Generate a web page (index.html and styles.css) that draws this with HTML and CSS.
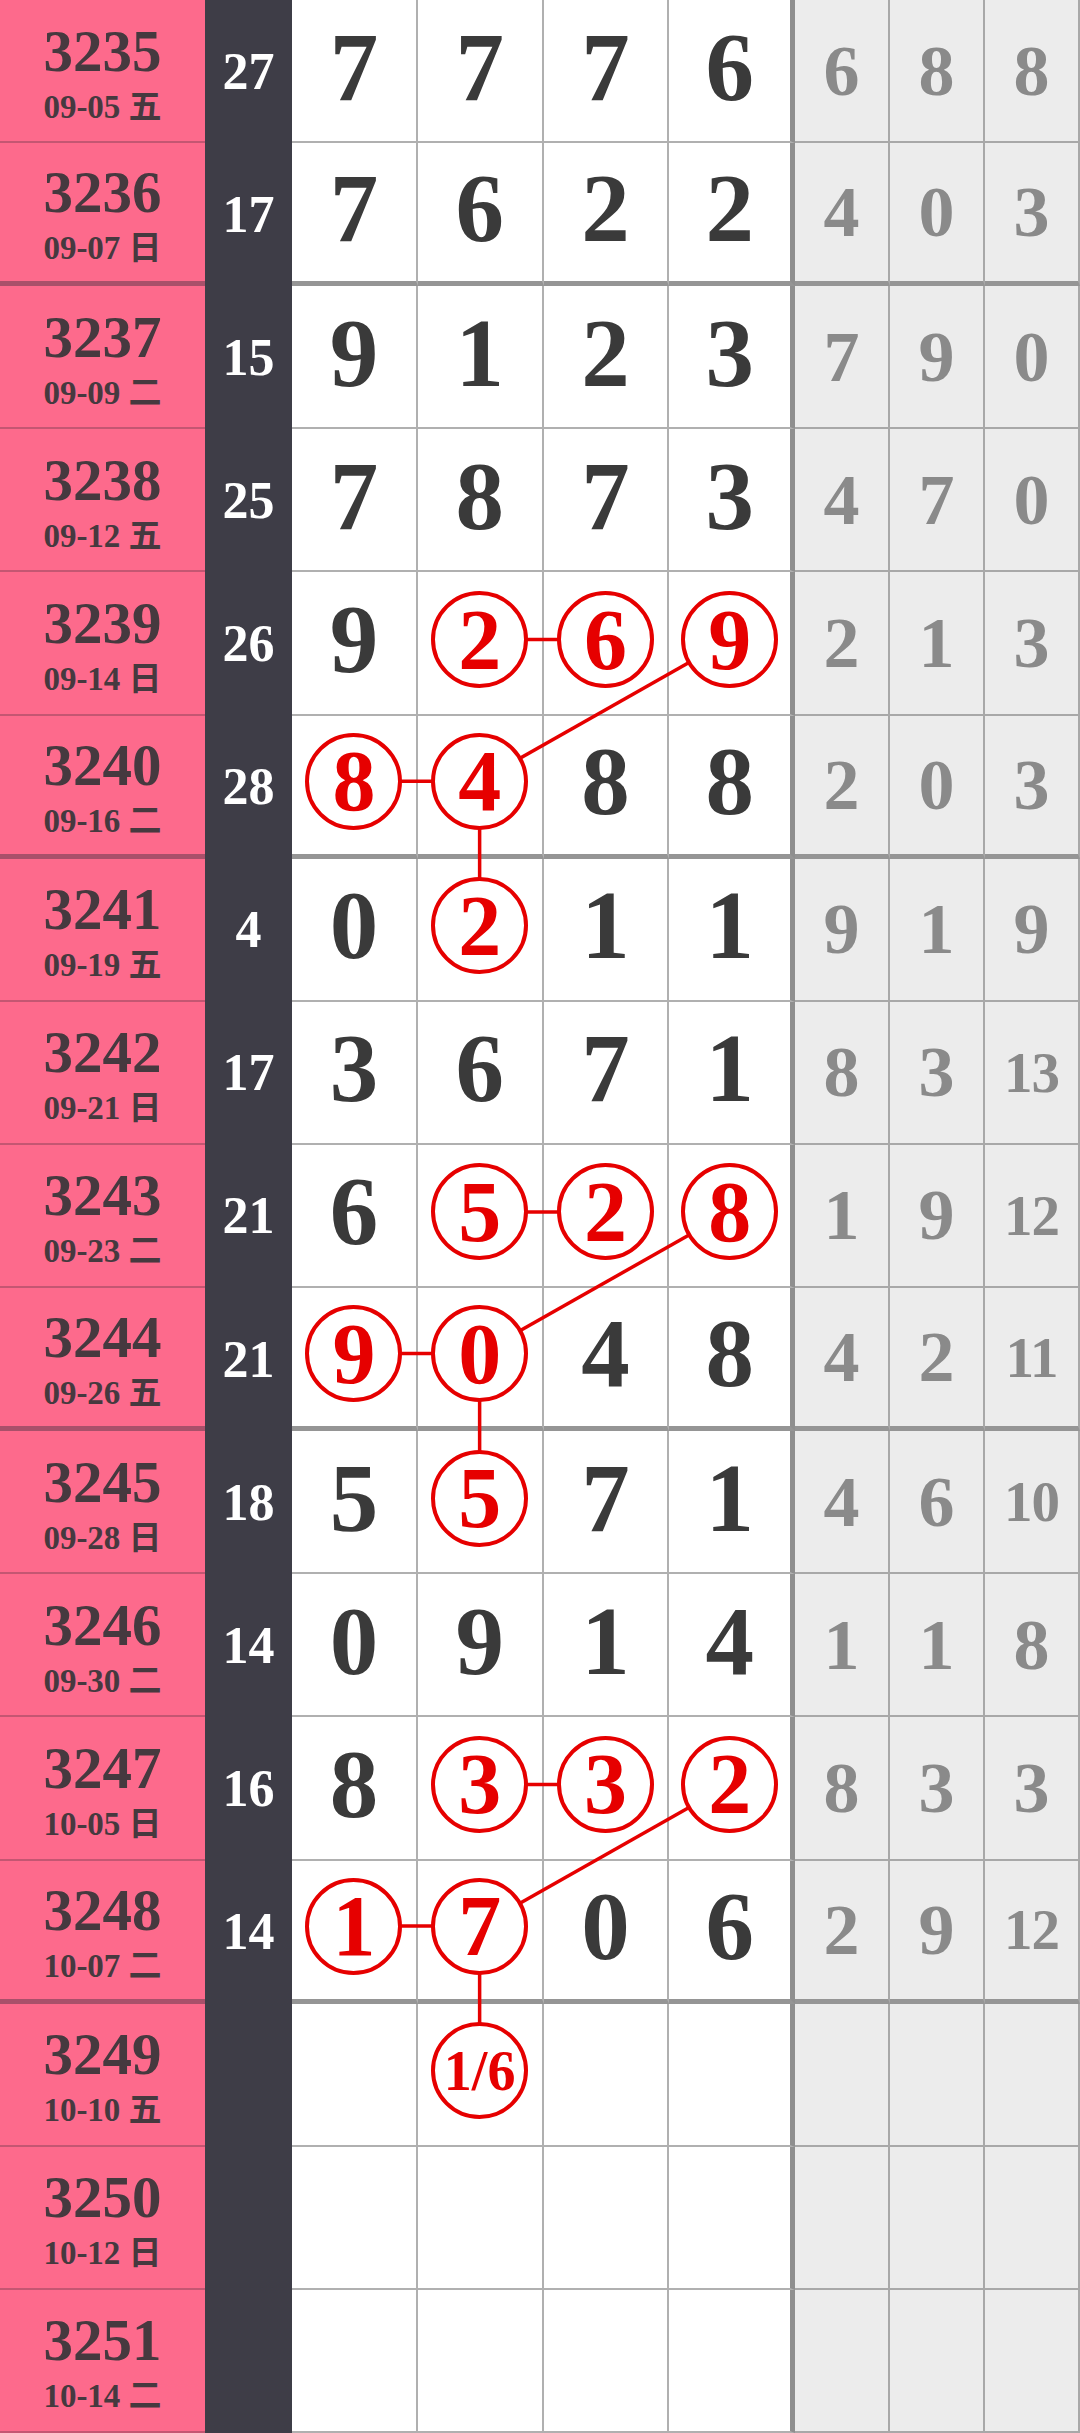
FILE: index.html
```html
<html>
<head>
    <title>排列三走势</title>
    <link rel="stylesheet" href="styles.css">
</head>
<body>
    <div class="board" id="board">
        <svg class="links" id="links"></svg>
    </div>

    <script>
        // issue, date, sum, digits ('*' = circled), missing counts
        const rows = [
            ['3235', '09-05 五', '27', ['7', '7', '7', '6'], ['6', '8', '8']],
            ['3236', '09-07 日', '17', ['7', '6', '2', '2'], ['4', '0', '3']],
            ['3237', '09-09 二', '15', ['9', '1', '2', '3'], ['7', '9', '0']],
            ['3238', '09-12 五', '25', ['7', '8', '7', '3'], ['4', '7', '0']],
            ['3239', '09-14 日', '26', ['9', '*2', '*6', '*9'], ['2', '1', '3']],
            ['3240', '09-16 二', '28', ['*8', '*4', '8', '8'], ['2', '0', '3']],
            ['3241', '09-19 五', '4', ['0', '*2', '1', '1'], ['9', '1', '9']],
            ['3242', '09-21 日', '17', ['3', '6', '7', '1'], ['8', '3', '13']],
            ['3243', '09-23 二', '21', ['6', '*5', '*2', '*8'], ['1', '9', '12']],
            ['3244', '09-26 五', '21', ['*9', '*0', '4', '8'], ['4', '2', '11']],
            ['3245', '09-28 日', '18', ['5', '*5', '7', '1'], ['4', '6', '10']],
            ['3246', '09-30 二', '14', ['0', '9', '1', '4'], ['1', '1', '8']],
            ['3247', '10-05 日', '16', ['8', '*3', '*3', '*2'], ['8', '3', '3']],
            ['3248', '10-07 二', '14', ['*1', '*7', '0', '6'], ['2', '9', '12']],
            ['3249', '10-10 五', '', ['', '*1/6', '', ''], ['', '', '']],
            ['3250', '10-12 日', '', ['', '', '', ''], ['', '', '']],
            ['3251', '10-14 二', '', ['', '', '', ''], ['', '', '']]
        ];
        const groupEnds = [1, 5, 9, 13];
        const groupStarts = [4, 8, 12];

        const board = document.getElementById('board');
        const links = document.getElementById('links');

        function addCell(className, html) {
            const cell = document.createElement('div');
            cell.className = 'cell ' + className;
            cell.innerHTML = html;
            board.appendChild(cell);
            return cell;
        }

        rows.forEach((row, r) => {
            const [issue, date, sum, nums, miss] = row;
            const end = groupEnds.includes(r) ? ' end' : '';

            addCell('issue' + end, `<span class="no">${issue}</span><span class="date">${date}</span>`);
            addCell('sum', sum);

            nums.forEach((n, c) => {
                const last = c === nums.length - 1 ? ' last' : '';
                let html = n;
                if (n.startsWith('*')) {
                    const label = n.slice(1);
                    const small = label.length > 1 ? ' small' : '';
                    html = `<span class="ring${small}" id="ring-${r}-${c}">${label}</span>`;
                }
                addCell('num' + last + end, html);
            });

            miss.forEach((m, c) => {
                const two = m.length > 1 ? ' two' : '';
                addCell('miss' + two + end, m);
            });
        });

        // red connecting lines between circled digits
        const pairs = [];
        groupStarts.forEach(r => {
            pairs.push([[r, 1], [r, 2]]);
            pairs.push([[r, 3], [r + 1, 1]]);
            pairs.push([[r + 1, 0], [r + 1, 1]]);
            pairs.push([[r + 1, 1], [r + 2, 1]]);
        });

        function center(r, c) {
            const box = document.getElementById(`ring-${r}-${c}`).getBoundingClientRect();
            const base = board.getBoundingClientRect();
            return [box.left - base.left + box.width / 2, box.top - base.top + box.height / 2];
        }

        links.setAttribute('width', board.offsetWidth);
        links.setAttribute('height', board.offsetHeight);
        pairs.forEach(([a, b]) => {
            const p = center(a[0], a[1]);
            const q = center(b[0], b[1]);
            const line = document.createElementNS('http://www.w3.org/2000/svg', 'line');
            line.setAttribute('x1', p[0]);
            line.setAttribute('y1', p[1]);
            line.setAttribute('x2', q[0]);
            line.setAttribute('y2', q[1]);
            links.appendChild(line);
        });
    </script>
</body>
</html>
```

FILE: styles.css
```css
body {
    margin: 0;
    background: #fff;
    font-family: 'Liberation Serif', 'Noto Sans CJK SC', serif;
}
.board {
    position: relative;
    display: grid;
    grid-template-columns: 205px 87px repeat(4, 1fr) repeat(3, 95px);
    grid-template-rows: repeat(17, 1fr);
    width: 1080px;
    height: 2433px;
}
.links {
    position: absolute;
    top: 0;
    left: 0;
    z-index: 1;
    pointer-events: none;
}
.links line {
    stroke: #e60000;
    stroke-width: 3.5;
}
.cell {
    box-sizing: border-box;
    display: flex;
    align-items: center;
    justify-content: center;
    font-weight: bold;
    line-height: 1;
}
.issue {
    flex-direction: column;
    gap: 10px;
    padding-top: 4px;
    background: #fd6a8c;
    color: #46393f;
    border-bottom: 2px solid #c45672;
}
.issue.end { border-bottom: 5px solid #a9506a; }
.issue .no { font-size: 59px; }
.issue .date { font-size: 33px; }
.sum {
    background: #3e3d47;
    color: #fff;
    font-size: 52px;
}
.num {
    padding-bottom: 7px;
    background: #fff;
    color: #3a3a3a;
    font-size: 97px;
    border-right: 2px solid #b0b0b0;
    border-bottom: 2px solid #b0b0b0;
}
.num.last { border-right: 5px solid #8f8f8f; }
.num.end, .miss.end { border-bottom: 5px solid #959595; }
.miss {
    background: #ececec;
    color: #8a8a8a;
    font-size: 72px;
    border-right: 2px solid #a8a8a8;
    border-bottom: 2px solid #a8a8a8;
}
.miss.two { font-size: 57px; letter-spacing: -1px; }
.ring {
    position: relative;
    z-index: 2;
    box-sizing: border-box;
    display: flex;
    align-items: center;
    justify-content: center;
    width: 97px;
    height: 97px;
    border: 4px solid #e60000;
    border-radius: 50%;
    background: #fff;
    color: #e60000;
    font-size: 86px;
}
.ring.small { font-size: 56px; }
```
